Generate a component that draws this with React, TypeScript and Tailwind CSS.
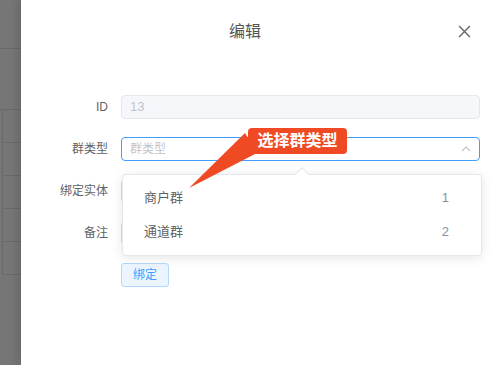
const font = "font-['Helvetica_Neue','Liberation_Sans','Noto_Sans_CJK_SC',sans-serif]";

function Row({ label, children }: { label: string; children?: React.ReactNode }) {
  return (
    <div className="mb-[18px] flex h-[24px] items-center">
      <div className="w-[87px] shrink-0 text-right text-[12px] text-[#606266]">{label}</div>
      <div className="ml-[13px] h-full w-[359px]">{children}</div>
    </div>
  );
}

const options = [
  { name: "商户群", value: 1 },
  { name: "通道群", value: 2 },
];

export default function App() {
  return (
    <div className={`flex h-[365px] w-[500px] overflow-hidden ${font}`}>
      {/* dimmed page behind the dialog */}
      <div className="flex w-[21px] shrink-0 flex-col bg-[#767676]">
        <div className="h-[49px] border-b border-[#6a6a6a]" />
        <div className="h-[61px] border-b border-[#6a6a6a]" />
        {[0, 1, 2, 3, 4].map((i) => (
          <div key={i} className="ml-[2px] h-[33px] border-b border-l border-[#6a6a6a]" />
        ))}
      </div>

      <div className="relative flex-1 bg-white shadow-[-4px_0_8px_rgba(0,0,0,0.12)]">
        <div className="flex h-[63px] items-center pr-[29px]">
          <span className="ml-[208px] text-[16px] text-[#555]">编辑</span>
          <svg className="ml-auto h-[13px] w-[13px]" viewBox="0 0 12 12" fill="none" stroke="#666" strokeWidth="1.3">
            <path d="M1 1L11 11M11 1L1 11" />
          </svg>
        </div>

        <div className="pt-[32px]">
          <Row label="ID">
            <div className="flex h-full items-center rounded-[4px] border border-[#e4e7ed] bg-[#f5f7fa] px-[8px] text-[13px] text-[#c0c4cc]">
              13
            </div>
          </Row>
          <Row label="群类型">
            <div className="flex h-full items-center rounded-[4px] border border-[#409eff] px-[8px] text-[12px] text-[#c0c4cc]">
              <span>群类型</span>
              <svg className="ml-auto h-[10px] w-[10px]" viewBox="0 0 10 10" fill="none" stroke="#c0c4cc" strokeWidth="1.1">
                <path d="M1 7L5 3L9 7" />
              </svg>
            </div>
          </Row>
          <Row label="绑定实体">
            <div className="h-full rounded-[4px] border border-[#dcdfe6]" />
          </Row>
          <Row label="备注">
            <div className="h-full rounded-[4px] border border-[#dcdfe6]" />
          </Row>
          <div className="ml-[100px] flex h-[24px] w-[48px] items-center justify-center rounded-[3px] border border-[#b3d8ff] bg-[#ecf5ff] text-[12px] text-[#409eff]">
            绑定
          </div>
        </div>

        {/* select dropdown */}
        <div className="absolute left-[101px] top-[174px] w-[360px] rounded-[4px] border border-[#e4e7ed] bg-white py-[6px] shadow-[0_2px_12px_rgba(0,0,0,0.1)]">
          <div className="absolute -top-[6px] left-[174px] h-[10px] w-[10px] rotate-45 border-l border-t border-[#e4e7ed] bg-white" />
          {options.map((o) => (
            <div key={o.value} className="flex h-[34px] items-center pl-[21px] pr-[32px] text-[13px] text-[#606266]">
              <span>{o.name}</span>
              <span className="ml-auto text-[#8492a6]">{o.value}</span>
            </div>
          ))}
        </div>

        {/* annotation callout */}
        <svg className="absolute left-0 top-0 h-[200px] w-[260px]" viewBox="0 0 260 200">
          <polygon points="168,188 224,133 236,153" fill="#ef4a24" />
        </svg>
        <div className="absolute left-[227px] top-[128px] flex h-[26px] w-[99px] items-center justify-center rounded-[4px] bg-[#ef4a24] text-[16px] font-bold text-white">
          选择群类型
        </div>
      </div>
    </div>
  );
}
